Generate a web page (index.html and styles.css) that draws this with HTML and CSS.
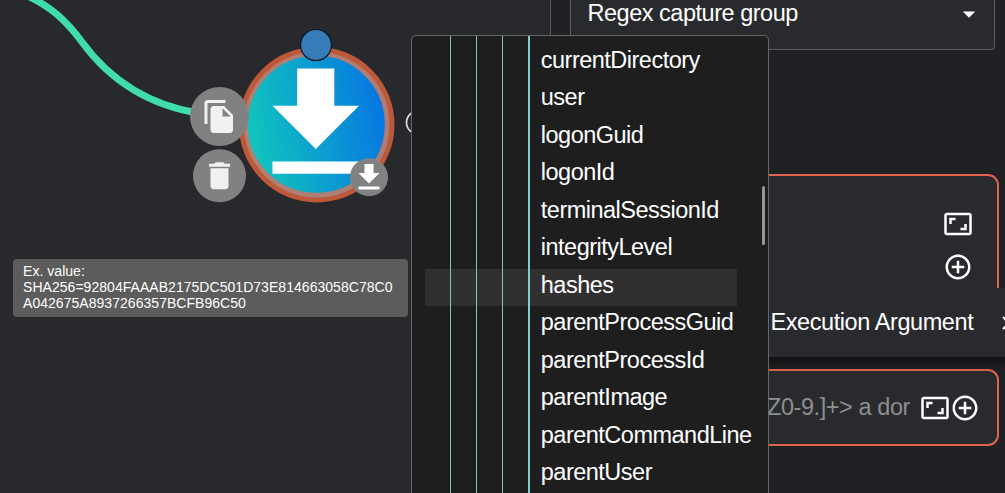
FILE: index.html
```html
<!DOCTYPE html>
<html lang="en">
<head>
<meta charset="utf-8">
<title>Workflow editor</title>
<link rel="stylesheet" href="styles.css">
</head>
<body>
<svg class="defs" width="0" height="0">
  <symbol id="download" viewBox="0 0 24 24"><path d="M19 9h-4V3H9v6H5l7 7 7-7zM5 18v2h14v-2H5z"/></symbol>
  <symbol id="expand" viewBox="0 0 24 24"><path d="M19 12h-2v3h-3v2h5v-5zM7 9h3V7H5v5h2V9zm14-6H3c-1.1 0-2 .9-2 2v14c0 1.1.9 2 2 2h18c1.1 0 2-.9 2-2V5c0-1.1-.9-2-2-2zm0 16.010H3V4.990h18v14.020z"/></symbol>
  <symbol id="add" viewBox="0 0 24 24"><path d="M13 7h-2v4H7v2h4v4h2v-4h4v-2h-4V7zm-1-5C6.480 2 2 6.480 2 12s4.480 10 10 10 10-4.480 10-10S17.520 2 12 2zm0 18c-4.410 0-8-3.590-8-8s3.590-8 8-8 8 3.590 8 8-3.590 8-8 8z"/></symbol>
</svg>
<div class="app">
  <main class="canvas">
    <svg class="graph" viewBox="0 0 550 493">
      <defs>
        <linearGradient id="nodeFill" x1="0" y1="0.6" x2="1" y2="0.4">
          <stop offset="0.05" stop-color="#10c6bd"/>
          <stop offset="1" stop-color="#0672e4"/>
        </linearGradient>
      </defs>
      <path class="edge" d="M23 -6C52 6 68 23 82 42C109 79 147 105 200 113.500"/>
      <circle cx="316.500" cy="124.500" r="76" fill="url(#nodeFill)"/>
      <circle class="ring-inner" cx="316.300" cy="124.300" r="71"/>
      <circle class="ring-outer" cx="316.700" cy="124.700" r="75.300"/>
      <use href="#download" class="glyph" x="241.500" y="50" width="148.500" height="148.500"/>
      <circle class="port" cx="316" cy="45" r="15.500"/>
      <circle class="button" cx="219.500" cy="116.500" r="29.500"/>
      <svg class="soft" x="201.500" y="98.500" width="36" height="36" viewBox="0 0 24 24"><path d="M16 1H4c-1.100 0-2 .9-2 2v14h2V3h12V1zm-1 4l6 6v10c0 1.100-.9 2-2 2H7.990C6.890 23 6 22.100 6 21V7c0-1.100.89-2 1.990-2h7zm-1 7h5.500L14 6.500V12z"/></svg>
      <circle class="button" cx="219.500" cy="175.800" r="26.500"/>
      <svg class="soft" x="201.500" y="157.700" width="36" height="36" viewBox="0 0 24 24"><path d="M6 19c0 1.100.9 2 2 2h8c1.100 0 2-.9 2-2V7H6v12zM19 4h-3.500l-1-1h-5l-1 1H5v2h14V4z"/></svg>
      <circle class="button" cx="369" cy="177.300" r="19"/>
      <use href="#download" class="glyph" x="351" y="159.500" width="36" height="36"/>
      <circle class="handle" cx="418" cy="122.500" r="11.500"/>
    </svg>
  </main>
  <aside class="panel">
    <div class="select"><span>Regex capture group</span><svg class="caret" viewBox="0 0 24 24"><path d="M7 10l5 5 5-5z"/></svg></div>
    <div class="field tall">
      <svg class="icon"><use href="#expand"/></svg>
      <svg class="icon"><use href="#add"/></svg>
    </div>
    <div class="field short">
      <span class="hint">Z0-9.]+&gt; a dor</span>
      <svg class="icon"><use href="#expand"/></svg>
      <svg class="icon"><use href="#add"/></svg>
    </div>
  </aside>
</div>
<div class="argument-bar"><span>Execution Argument</span><svg class="close" viewBox="0 0 14 14"><path d="M1 1l12 12M13 1L1 13"/></svg></div>
<div class="menu">
  <div class="guides"><i></i><i></i><i></i><i class="active"></i></div>
  <ul class="options">
    <li>currentDirectory</li>
    <li>user</li>
    <li>logonGuid</li>
    <li>logonId</li>
    <li>terminalSessionId</li>
    <li>integrityLevel</li>
    <li class="hover">hashes</li>
    <li>parentProcessGuid</li>
    <li>parentProcessId</li>
    <li>parentImage</li>
    <li>parentCommandLine</li>
    <li>parentUser</li>
  </ul>
  <div class="thumb"></div>
</div>
<div class="tooltip">Ex. value:<br>SHA256=92804FAAAB2175DC501D73E814663058C78C0<br>A042675A8937266357BCFB96C50</div>
</body>
</html>
```
FILE: styles.css
```css
* { box-sizing: border-box; }
body {
  margin: 0;
  height: 493px;
  position: relative;
  overflow: hidden;
  background: #202124;
  color: #fff;
  font: 23.5px/37.5px "Liberation Sans", Arial, sans-serif;
  letter-spacing: -.42px;
}
svg { display: block; fill: #fff; }
.defs { position: absolute; }
.app { display: grid; grid-template-columns: 551px 1fr; height: 493px; }
.canvas { background: #28292d; border-right: 1px solid #58595b; overflow: hidden; }
.graph { width: 550px; height: 493px; }
.edge { fill: none; stroke: #40dca9; stroke-width: 7; }
.ring-inner { fill: none; stroke: #b97c6e; stroke-opacity: .95; stroke-width: 5; }
.ring-outer { fill: none; stroke: #be5839; stroke-width: 5; }
.port { fill: #357cb8; stroke: #0b1420; stroke-width: 1.2; }
.button { fill: #818181; }
.soft { fill: #f1f1f1; }
.handle { fill: none; stroke: #ddd; stroke-width: 1.7; }

.panel { padding: 0 6px 0 19px; display: flex; flex-direction: column; }
.select {
  height: 50px;
  width: 425px;
  padding: 0 10px 23px 16.5px;
  display: flex;
  align-items: flex-end;
  justify-content: space-between;
  line-height: 26px;
  letter-spacing: -.48px;
  background: #292a2d;
  border: 1px solid #5d5e60;
  border-top: 0;
  border-radius: 0 0 4px 4px;
}
.caret { width: 30px; height: 30px; margin-bottom: -3px; }
.field {
  width: 429px;
  display: flex;
  align-items: center;
  background: #292a2d;
  border: 2px solid #df634d;
  border-radius: 11px;
}
.icon { width: 30px; height: 30px; flex: none; }
.tall { margin-top: 124px; height: 160px; padding: 33px 24px 0; flex-direction: column; align-items: flex-end; gap: 13px; }
.short { margin-top: 35px; height: 77px; padding-right: 17px; justify-content: flex-end; }
.hint { color: #8d8e90; margin: 0 10px 2px 0; line-height: 36px; }

.argument-bar {
  position: absolute;
  left: 700px;
  top: 288px;
  width: 316px;
  height: 69px;
  padding: 0 0 0 70.5px;
  display: flex;
  align-items: center;
  justify-content: space-between;
  background: #292a2d;
  box-shadow: 0 4px 9px 2px rgba(0, 0, 0, .5);
  clip-path: inset(0 0 -20px 0);
  white-space: nowrap;
}
.close { width: 14px; height: 14px; fill: none; stroke: #fff; stroke-width: 2; }

.menu {
  position: absolute;
  left: 411px;
  top: 35px;
  width: 358px;
  height: 480px;
  padding: 7.5px 31px 0 13px;
  background: #1e1e1e;
  border: 1px solid #66686a;
  border-radius: 5px;
  letter-spacing: -.51px;
}
.options { list-style: none; margin: 0; padding: 0; }
.options li { height: 37.5px; padding-left: 115.8px; line-height: 33px; white-space: nowrap; }
.options .hover { background: #303030; }
.guides { position: absolute; left: 38px; top: 0; bottom: 0; display: flex; gap: 25px; }
.guides i { width: 1px; background: #86c6ab; }
.guides .active { width: 2px; background: #82cfcb; }
.thumb { position: absolute; left: 350px; top: 150px; width: 3px; height: 59px; border-radius: 2px; background: #959595; }

.tooltip {
  position: absolute;
  left: 13px;
  top: 259px;
  width: 395px;
  height: 58px;
  padding: 4px 10px;
  border-radius: 4px;
  background: #5c5c5c;
  font-size: 14px;
  line-height: 16px;
  letter-spacing: .04px;
  white-space: nowrap;
}
```
